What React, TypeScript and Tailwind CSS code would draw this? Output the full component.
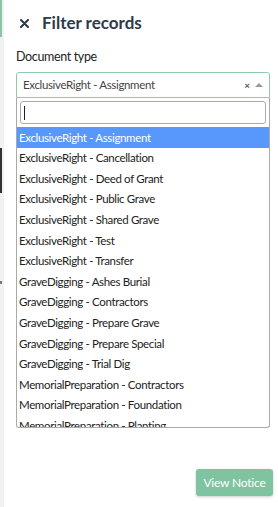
import React from 'react';

const OPTIONS = [
  'ExclusiveRight - Assignment',
  'ExclusiveRight - Cancellation',
  'ExclusiveRight - Deed of Grant',
  'ExclusiveRight - Public Grave',
  'ExclusiveRight - Shared Grave',
  'ExclusiveRight - Test',
  'ExclusiveRight - Transfer',
  'GraveDigging - Ashes Burial',
  'GraveDigging - Contractors',
  'GraveDigging - Prepare Grave',
  'GraveDigging - Prepare Special',
  'GraveDigging - Trial Dig',
  'MemorialPreparation - Contractors',
  'MemorialPreparation - Foundation',
  'MemorialPreparation - Planting',
  'MemorialPreparation - Removal',
];

export default function App() {
  const selected = OPTIONS[0];

  return (
    <div className="flex h-[507px] w-[278px] overflow-hidden bg-white font-['Lato',sans-serif] text-[#333]">
      {/* bit of the page behind the panel */}
      <div className="flex w-[4px] flex-col bg-[#f1f1f1]">
        <div className="h-[37px] w-[2px] bg-[#8ec5a8]" />
        <div className="mt-[111px] h-[45px] w-[2px] bg-[#333]" />
        <div className="mt-[88px] h-[3px] w-[2px] bg-[#777]" />
      </div>

      <div className="flex flex-1 flex-col pl-[12px] pr-[4px]">
        <div className="flex items-center pt-[12px]">
          <svg width="9" height="9" viewBox="0 0 9 9" className="ml-[4px]">
            <path d="M1 1 L8 8 M8 1 L1 8" stroke="#2d3a4a" strokeWidth="2" strokeLinecap="round" />
          </svg>
          <h1 className="ml-[13px] text-[17px] font-bold leading-[22px] text-[#2d3a4a]">Filter records</h1>
        </div>

        <label className="mt-[15px] text-[12.5px] leading-[16px] tracking-[-0.35px] text-[#222]">Document type</label>

        <div className="mt-[7px] w-[254px]">
          <div className="flex h-[26px] items-center rounded-t-[3px] border border-[#8fcaa9] pl-[6px] pr-[6px]">
            <span className="flex-1 truncate text-[11.5px] tracking-[-0.35px] text-[#444]">{selected}</span>
            <span className="text-[10px] font-bold leading-none text-[#555]">×</span>
            <svg width="8" height="6" viewBox="0 0 8 6" className="ml-[5px]">
              <path d="M0 5 L4 1 L8 5 Z" fill="#999" />
            </svg>
          </div>

          <div className="h-[330px] overflow-hidden rounded-b-[3px] border-x border-b border-[#aaa] bg-white">
            <div className="px-[3px] pt-[3px] pb-[3px]">
              <div className="flex h-[23px] items-center rounded-[3px] border border-[#aaa] pl-[3px]">
                <div className="h-[14px] w-px bg-[#222]" />
              </div>
            </div>
            <ul>
              {OPTIONS.map((o, i) => (
                <li
                  key={o}
                  className={`flex h-[20.6px] items-center pl-[2px] text-[11.5px] tracking-[-0.35px] whitespace-nowrap ${
                    i === 0 ? 'bg-[#5897fb] text-white' : 'text-[#222]'
                  }`}
                >
                  {o}
                </li>
              ))}
            </ul>
          </div>
        </div>

        <div className="mt-auto mb-[11px] flex justify-end pr-[1px]">
          <button className="h-[27px] w-[77px] rounded-[3px] bg-[#80c3a0] text-[12px] tracking-[-0.2px] text-white shadow-[0_1px_3px_rgba(0,0,0,0.2)]">
            View Notice
          </button>
        </div>
      </div>
    </div>
  );
}
